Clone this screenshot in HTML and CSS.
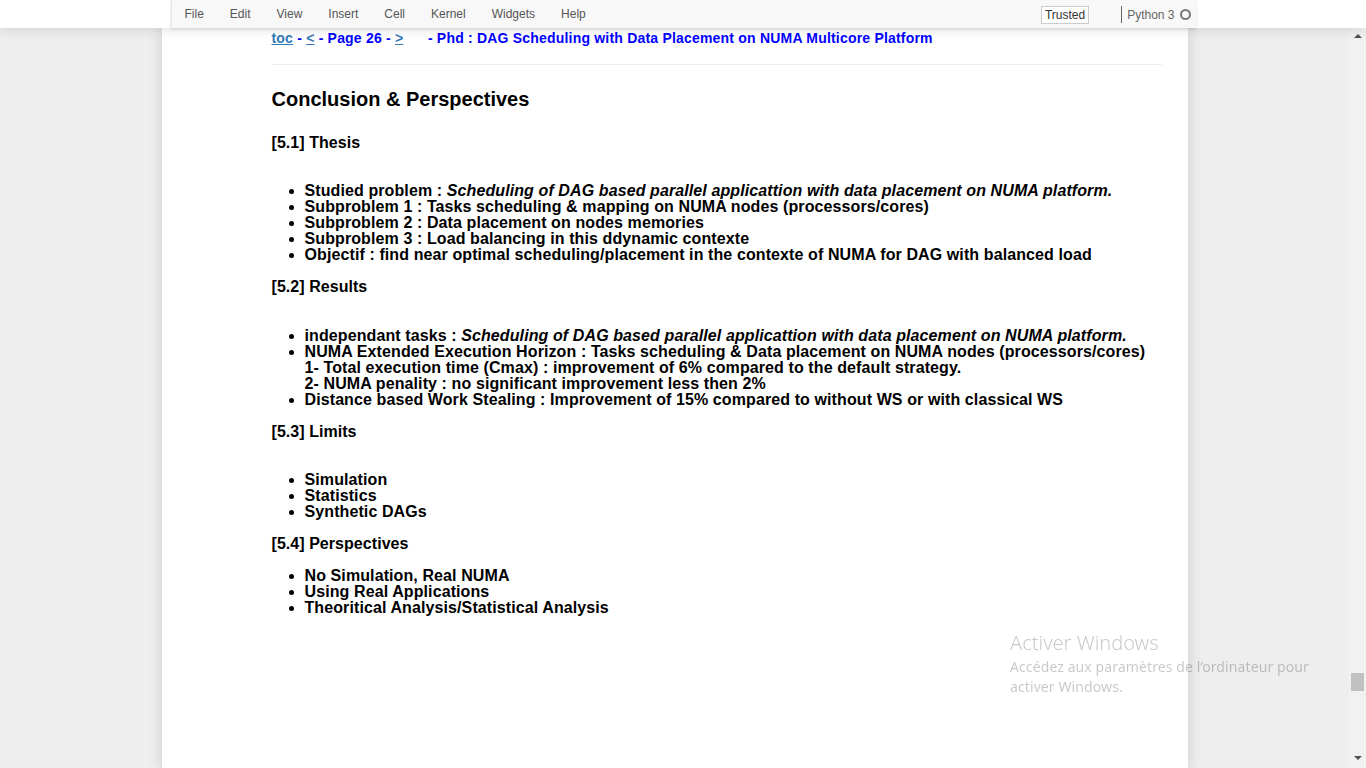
FILE: index.html
```html
<!DOCTYPE html>
<html lang="en">
<head>
<meta charset="utf-8">
<title>Conclusion &amp; Perspectives</title>
<link rel="stylesheet" href="styles.css">
</head>
<body>
<header class="header">
  <nav class="menubar">
    <ul class="menu">
      <li>File</li>
      <li>Edit</li>
      <li>View</li>
      <li>Insert</li>
      <li>Cell</li>
      <li>Kernel</li>
      <li>Widgets</li>
      <li>Help</li>
    </ul>
    <div class="kernel-info">
      <span class="trusted">Trusted</span>
      <span class="divider"></span>
      <span class="kernel-name">Python 3</span>
      <span class="kernel-status"></span>
    </div>
  </nav>
</header>
<div class="viewport">
  <main class="main">
    <div class="notebook">
      <p class="navline"><a href="#">toc</a> - <a href="#">&lt;</a> - Page 26 - <a href="#">&gt;</a>&nbsp;&nbsp;&nbsp;&nbsp;&nbsp; - Phd : DAG Scheduling with Data Placement on NUMA Multicore Platform</p>
      <hr class="rule">
      <h2 class="title">Conclusion &amp; Perspectives</h2>

      <h4 class="section">[5.1] Thesis</h4>
      <div class="spacer"></div>
      <ul class="items">
        <li>Studied problem : <em>Scheduling of DAG based parallel applicattion with data placement on NUMA platform.</em></li>
        <li>Subproblem 1 : Tasks scheduling &amp; mapping on NUMA nodes (processors/cores)</li>
        <li>Subproblem 2 : Data placement on nodes memories</li>
        <li>Subproblem 3 : Load balancing in this ddynamic contexte</li>
        <li>Objectif : find near optimal scheduling/placement in the contexte of NUMA for DAG with balanced load</li>
      </ul>

      <h4 class="section">[5.2] Results</h4>
      <div class="spacer"></div>
      <ul class="items">
        <li>independant tasks : <em>Scheduling of DAG based parallel applicattion with data placement on NUMA platform.</em></li>
        <li>NUMA Extended Execution Horizon : Tasks scheduling &amp; Data placement on NUMA nodes (processors/cores)<br>1- Total execution time (Cmax) : improvement of 6% compared to the default strategy.<br>2- NUMA penality : no significant improvement less then 2%</li>
        <li>Distance based Work Stealing : Improvement of 15% compared to without WS or with classical WS</li>
      </ul>

      <h4 class="section">[5.3] Limits</h4>
      <div class="spacer"></div>
      <ul class="items">
        <li>Simulation</li>
        <li>Statistics</li>
        <li>Synthetic DAGs</li>
      </ul>

      <h4 class="section">[5.4] Perspectives</h4>
      <ul class="items">
        <li>No Simulation, Real NUMA</li>
        <li>Using Real Applications</li>
        <li>Theoritical Analysis/Statistical Analysis</li>
      </ul>
    </div>
  </main>
  <div class="scrollbar">
    <span class="arrow-up"></span>
    <span class="thumb-track"><span class="thumb"></span></span>
    <span class="arrow-down"></span>
  </div>
</div>
<div class="watermark">
  <div class="wm-title">Activer Windows</div>
  <div class="wm-text">Accédez aux paramètres de l’ordinateur pour<br>activer Windows.</div>
</div>
</body>
</html>
```

FILE: styles.css
```css
html, body {
  margin: 0;
  padding: 0;
  height: 100%;
  overflow: hidden;
}

body {
  background: #eeeeee;
  font-family: "Liberation Sans", Arial, sans-serif;
  color: #000;
}

.header {
  height: 28px;
  background: #fff;
  box-shadow: 0 0 12px 1px rgba(87, 87, 87, 0.2);
  position: relative;
  z-index: 2;
}

.menubar {
  width: 1025px;
  height: 28px;
  margin: 0 auto;
  background: #f8f8f8;
  border-left: 1px solid #e7e7e7;
  box-sizing: border-box;
  box-shadow: 0 1px 3px rgba(0, 0, 0, 0.12);
  display: flex;
  align-items: center;
  justify-content: space-between;
}

.menu {
  list-style: none;
  margin: 0;
  padding: 0;
  display: flex;
  font-size: 12px;
  color: #555;
}

.menu li {
  padding: 0 13px;
  line-height: 29px;
}

.kernel-info {
  display: flex;
  align-items: center;
  font-size: 12px;
  color: #555;
  padding-right: 5px;
}

.trusted {
  font-size: 12px;
  color: #333;
  background: #fff;
  border: 1px solid #ccc;
  padding: 1px 3px;
  line-height: 14px;
  margin-top: 2px;
}

.divider {
  width: 1px;
  height: 17px;
  background: #666;
  margin-left: 32px;
  margin-right: 5px;
  margin-top: 1px;
}

.kernel-name {
  color: #666;
  margin-top: 1px;
}

.kernel-status {
  width: 7px;
  height: 7px;
  border: 2px solid #777;
  border-radius: 50%;
  margin-left: 5px;
  margin-top: 1px;
}

.viewport {
  display: flex;
  height: 740px;
}

.main {
  flex: 1;
  overflow: hidden;
}

.notebook {
  width: 1026px;
  margin: 0 auto;
  min-height: 740px;
  background: #fff;
  box-shadow: 0 0 12px 1px rgba(87, 87, 87, 0.2);
  box-sizing: border-box;
  padding: 0 26px 0 110px;
}

.navline {
  margin: 0;
  font-size: 14px;
  font-weight: bold;
  line-height: 20px;
  letter-spacing: 0.2px;
  color: #0000ff;
  white-space: nowrap;
}

.navline a {
  color: #337ab7;
  text-decoration: underline;
}

.rule {
  margin: 16px 0 0;
  border: 0;
  border-top: 1px solid #eee;
  height: 0;
}

.title {
  margin: 22px 0 0;
  font-size: 20px;
  line-height: 24px;
  font-weight: bold;
}

.section {
  margin: 22px 0 14px;
  font-size: 16px;
  line-height: 20px;
  font-weight: bold;
  letter-spacing: 0.05px;
}

.items + .section {
  margin-top: 0;
}

.spacer {
  height: 16.4px;
}

.items {
  margin: 0 0 14px;
  padding-left: 33px;
  font-size: 16px;
  line-height: 16px;
  font-weight: bold;
  letter-spacing: 0.1px;
}

.items em {
  font-style: italic;
}

.scrollbar {
  width: 17px;
  background: #f1f1f1;
  display: flex;
  flex-direction: column;
  align-items: center;
}

.arrow-up {
  margin-top: 6px;
  width: 0;
  height: 0;
  border-left: 4px solid transparent;
  border-right: 4px solid transparent;
  border-bottom: 4px solid #505050;
}

.thumb-track {
  flex: 1;
  width: 100%;
  display: flex;
  justify-content: center;
}

.thumb {
  width: 13px;
  height: 18px;
  background: #c1c1c1;
  margin-top: 635px;
}

.arrow-down {
  margin-bottom: 8px;
  width: 0;
  height: 0;
  border-left: 4px solid transparent;
  border-right: 4px solid transparent;
  border-top: 4px solid #505050;
}

.watermark {
  position: fixed;
  left: 1010px;
  top: 630px;
  color: rgba(0, 0, 0, 0.22);
  font-family: "Noto Sans", "Open Sans", sans-serif;
  z-index: 5;
  pointer-events: none;
}

.wm-title {
  font-size: 20px;
  line-height: 26px;
  font-weight: 300;
}

.wm-text {
  font-size: 14px;
  line-height: 20px;
  margin-top: 1px;
  letter-spacing: 0.1px;
}
```
